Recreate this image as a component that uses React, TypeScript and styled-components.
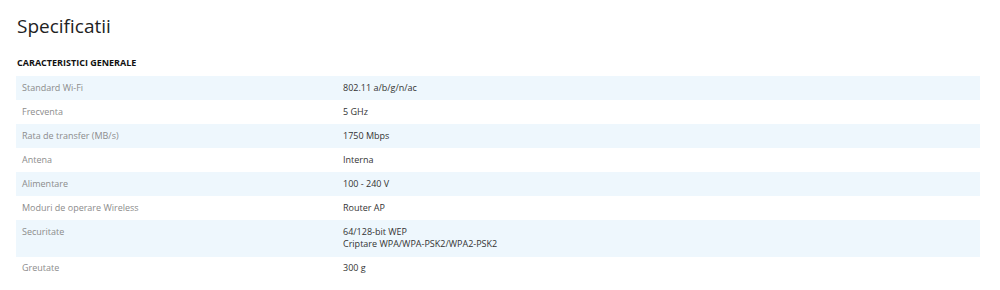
import styled, { createGlobalStyle } from "styled-components";

const GlobalStyle = createGlobalStyle`
    body {
        margin: 0;
        background: #fff;
        font-family: "Open Sans", "Liberation Sans", sans-serif;
    }
`;

const specs: { label: string; value: string[] }[] = [
    { label: "Standard Wi-Fi", value: ["802.11 a/b/g/n/ac"] },
    { label: "Frecventa", value: ["5 GHz"] },
    { label: "Rata de transfer (MB/s)", value: ["1750 Mbps"] },
    { label: "Antena", value: ["Interna"] },
    { label: "Alimentare", value: ["100 - 240 V"] },
    { label: "Moduri de operare Wireless", value: ["Router AP"] },
    {
        label: "Securitate",
        value: ["64/128-bit WEP", "Criptare WPA/WPA-PSK2/WPA2-PSK2"],
    },
    { label: "Greutate", value: ["300 g"] },
];

const App = () => {
    return (
        <>
            <GlobalStyle />
            <Section>
                <Title>Specificatii</Title>
                <GroupTitle>Caracteristici generale</GroupTitle>
                <SpecTable>
                    {specs.map((spec, i) => (
                        <Row key={spec.label} $striped={i % 2 === 0}>
                            <Label>{spec.label}</Label>
                            <Value>
                                {spec.value.map((line) => (
                                    <div key={line}>{line}</div>
                                ))}
                            </Value>
                        </Row>
                    ))}
                </SpecTable>
            </Section>
        </>
    );
};
export default App;

const Section = styled.section`
    padding: 14px 20px 0 16px;
    width: 1000px;
    box-sizing: border-box;
`;

const Title = styled.h2`
    margin: 0 0 0 1px;
    font-size: 19px;
    font-weight: 400;
    line-height: 24px;
    color: #222;
`;

const GroupTitle = styled.h3`
    margin: 18px 0 6px 1px;
    font-size: 9px;
    font-weight: 700;
    line-height: 14px;
    text-transform: uppercase;
    color: #111;
`;

const SpecTable = styled.div`
    display: flex;
    flex-direction: column;
`;

const Row = styled.div<{ $striped: boolean }>`
    display: grid;
    grid-template-columns: 321px 1fr;
    padding: 5.75px 6px;
    font-size: 9px;
    line-height: 12.5px;
    background: ${(p) => (p.$striped ? "#eef7fd" : "transparent")};
`;

const Label = styled.div`
    color: #8c8c8c;
`;

const Value = styled.div`
    color: #333;
`;
